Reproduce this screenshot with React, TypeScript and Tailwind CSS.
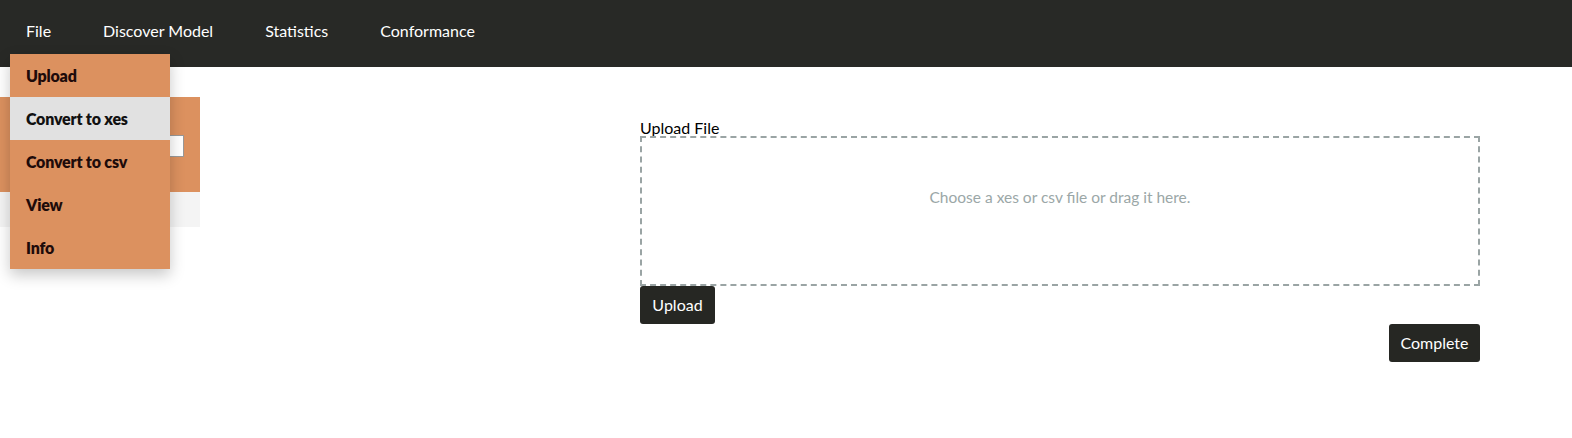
import React from "react";

const navItems = ["File", "Discover Model", "Statistics", "Conformance"];
const fileMenu = ["Upload", "Convert to xes", "Convert to csv", "View", "Info"];

function Navbar() {
  return (
    <nav className="relative flex h-[67px] items-center bg-[#282926] pl-[26px] pb-[5px]">
      {navItems.map((item) => (
        <span key={item} className="mr-[52px] text-[16px] text-white">
          {item}
        </span>
      ))}
      <div className="absolute left-[10px] top-[54px] z-10 w-[160px] bg-[#dc915f] shadow-[0_6px_14px_rgba(0,0,0,0.22)]">
        {fileMenu.map((item, index) => (
          <div
            key={item}
            className={
              "flex h-[43px] items-center pl-4 text-[16px] font-extrabold tracking-[-0.2px] text-[#1e0b0a] " +
              (index === 1 ? "bg-[#e1e1e1] text-[#111]" : "")
            }
          >
            {item}
          </div>
        ))}
      </div>
    </nav>
  );
}

export default function App() {
  return (
    <div className="min-h-[438px] bg-white font-['Lato','Open_Sans',sans-serif]">
      <Navbar />
      <div className="flex">
        <aside className="mt-[30px] w-[200px] shrink-0">
          <div className="flex h-[95px] items-center bg-[#dc915f] px-4">
            <div className="mt-[2px] h-[22px] w-full border border-[#999] bg-white" />
          </div>
          <div className="h-[35px] bg-[#f4f4f4]" />
        </aside>
        <main className="ml-[440px] mt-[52px] flex w-[840px] flex-col">
          <label className="text-[16px] leading-[17px] text-black">Upload File</label>
          <div className="flex h-[150px] items-start justify-center border-2 border-dashed border-[#9aa4a4] pt-[48px] text-[15.5px] text-[#9ba7a7]">
            Choose a xes or csv file or drag it here.
          </div>
          <div className="flex">
            <button className="h-[38px] w-[75px] rounded-[3px] bg-[#262723] text-[16px] text-white">
              Upload
            </button>
          </div>
          <div className="flex justify-end">
            <button className="h-[38px] w-[91px] rounded-[3px] bg-[#262723] text-[16px] text-white">
              Complete
            </button>
          </div>
        </main>
      </div>
    </div>
  );
}
